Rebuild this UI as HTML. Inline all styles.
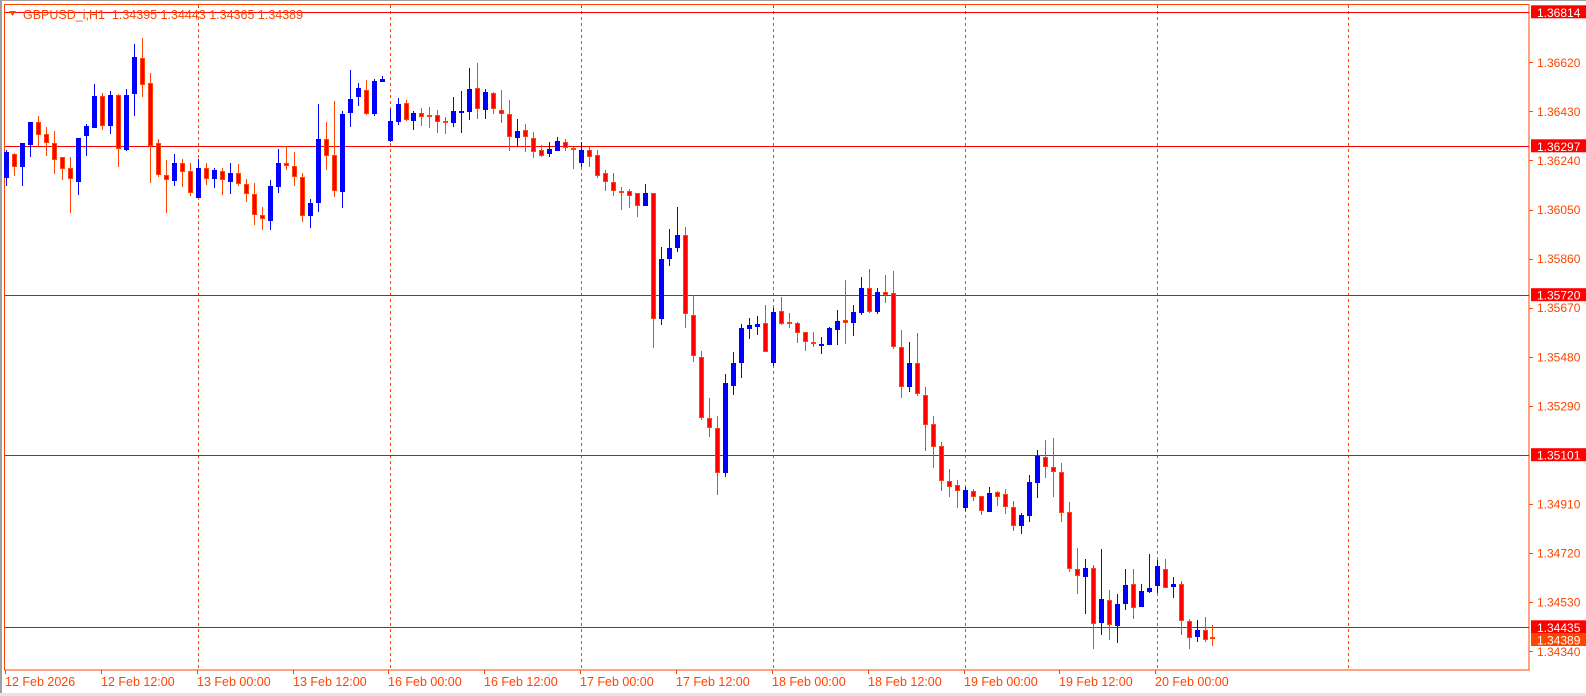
<!DOCTYPE html>
<html><head><meta charset="utf-8"><style>
html,body{margin:0;padding:0;background:#fff;width:1586px;height:696px;overflow:hidden}
svg{display:block}
text{font-family:"Liberation Sans",sans-serif}
</style></head><body>
<svg id="c" width="1586" height="696" xmlns="http://www.w3.org/2000/svg">
<rect x="0" y="0" width="1586" height="696" fill="#fff"/>
<rect x="0" y="0" width="2" height="696" fill="#a0a0a0"/>
<rect x="0" y="0" width="1586" height="1" fill="#a0a0a0"/>
<rect x="0" y="693" width="1586" height="3" fill="#e4e4e4"/>
<rect x="4.5" y="4.5" width="1524.5" height="665.5" fill="none" stroke="#ff4500" stroke-width="1"/>
<g id="grid" stroke="#ff4500" stroke-width="1" stroke-dasharray="3,3"></g>
<g id="hl" stroke="#ff0000" stroke-width="1"></g>
<g id="cd"></g>
<g id="ax" fill="#ff4500" font-size="12"></g>
<polygon points="9,11 16,11 12.5,16" fill="#ff4500"/>
<text x="23" y="19" font-size="12.5" fill="#ff4500" style="white-space:pre">GBPUSD_i,H1  1.34395 1.34443 1.34365 1.34389</text>
</svg>
<script>
var NS="http://www.w3.org/2000/svg";
function el(p,t,a,txt){var e=document.createElementNS(NS,t);for(var k in a)e.setAttribute(k,a[k]);if(txt!=null)e.textContent=txt;document.getElementById(p).appendChild(e);return e;}
var vx=[198,389.7,581.4,773,964.8,1156.5,1348];
vx.forEach(function(x){x=Math.round(x)+0.5;el('grid','line',{x1:x,y1:5,x2:x,y2:670});});
[12.3,146.3,295.2,455.2,627.3].forEach(function(y){y=Math.round(y)+0.5;el('hl','line',{x1:5,y1:y,x2:1529,y2:y});});
var segs=[
[0,0,"B455,533,450,557 R462,502,458,528 B430,500,430,557 B366,434,366,470 R366,406,348,438 R402,430,381,467 R430,479,393,521 R471,506,471,539 R505,538,471,638 B414,545,414,584 B379,409,371,467 B288,383,252,385 R288,377,280,390 B286,377,272,402 R286,448,282,500 B286,450,267,453 B171,281,131,347 R174,254,113,291 R249,437,219,548 R430,526,417,530 R525,541,481,638 B489,543,462,557 R489,515,476,560 R513,580,489,587 B504,593,477,593 R505,538,489,555 B510,536,505,563 R514,541,505,584 B519,545,489,581 R520,553,493,557 R552,583,537,607 R582,646,550,676 R646,656,620,690 B558,662,540,690 B489,560,447,580 R489,499,438,511 R498,530,456,558 R532,647,520,665 B608,647,596,683 B417,608,313,635 R417,467,366,509 R465,572,303,590 B342,575,333,623 B297,338,210,380 B264,290,249,317 R270,342,240,345 B243,342,237,349 B237,247,228,247 B363,422,327,426"],
[49,60,"B132,185,115,195 R130,180,120,183 B158,183,153,210 R160,170,145,198 R165,167,142,204 R165,185,150,218 R183,187,172,222 B153,188,110,200 B153,157,93,218 B87,155,23,180 R85,148,8,177 B97,150,87,177 R100,148,96,162 R150,163,90,188 R162,232,120,272 B213,233,177,260 R210,232,192,275 R235,275,215,293 R270,287,256,292 B267,281,246,290 B243,272,230,272 R247,265,237,272 R264,268,262,326 B270,308,247,322 R270,290,262,320 R286,347,270,353 R340,367,330,392 R367,392,340,407 R392,397,380,449 R393,407,387,443 R400,437,400,470 B400,437,372,437 R400,778,400,863 B597,776,562,795 B565,597,507,617 B525,563,440,575 R526,763,500,803 R766,887,706,905 R892,1073,872,1080 R1075,1105,1013,1130 R1105,1240,1068,1305 B970,1240,942,1250 B910,977,876,1005 B805,908,792,953 B796,808,774,838 B793,800,768,825 R790,877,735,877 B757,910,745,918 R753,792,711,795 R785,790,760,803"],
[99,260,"R190,220,185,250 R217,247,215,272 R247,253,215,262 B253,257,232,282 B205,254,200,254 B183,209,150,254 R181,190,60,251 B156,188,135,228 B84,160,51,165 R84,157,27,160 B96,157,84,162 R96,104,45,128 R100,260,33,266 R262,380,210,413 B310,380,246,395 R310,401,218,407 R406,496,381,572 R492,560,468,623 R559,664,546,692 R663,680,627,710 R676,694,660,743 B690,743,680,752 R692,711,688,722 R709,753,709,765 B700,755,682,755 R697,711,692,737 R703,742,688,763 R742,797,723,812 B766,797,758,822 B667,767,645,787 B587,668,570,713 R591,620,540,653 R622,635,533,710 R636,758,608,785 R757,926,725,935 R928,948,863,1003 B925,950,898,1063 R925,1093,915,1168 B1018,1090,867,1125 R1021,1096,990,1140 B1032,1097,1003,1148 B976,1033,927,1050 R972,1045,927,1078 B994,1042,972,1042 B985,995,882,1000 B918,977,900,1000 R928,985,897,985 B972,982,952,1015 R972,1083,962,1125 R1083,1133,1078,1168"],
[149,540,"B270,290,240,305 R270,301,231,307 R292,298,255,318"]
];
segs.forEach(function(s){
  var i=s[0],y0=s[1];
  s[2].split(" ").forEach(function(c){
    var t=c[0],v=c.slice(1).split(",").map(Number);
    var x=Math.round(6+7.99*i);
    var bt=Math.round(y0+v[0]/3),bb=Math.round(y0+v[1]/3),wt=Math.round(y0+v[2]/3),wb=Math.round(y0+v[3]/3);
    if(bb-bt<2)bb=bt+2;
    if(t=="B"){
      el('cd','rect',{x:x,y:wt,width:1,height:Math.max(1,wb-wt),fill:"#0000ff"});
      el('cd','rect',{x:x-2,y:bt,width:5,height:bb-bt,fill:"#0000ff"});
    }else{
      el('cd','rect',{x:x,y:wt,width:1,height:Math.max(1,wb-wt),fill:"#ff4500"});
      el('cd','rect',{x:x-2,y:bt,width:5,height:bb-bt,fill:"#ff4500"});
      if(bb-bt>2)el('cd','rect',{x:x-1,y:bt+1,width:3,height:bb-bt-2,fill:"#ff0000"});
    }
    i++;
  });
});
function py(p){return 62.3+(1.36620-p)/0.0019*49.08;}
["1.36620","1.36430","1.36240","1.36050","1.35860","1.35670","1.35480","1.35290","1.34910","1.34720","1.34530","1.34340"].forEach(function(s){
  var y=py(parseFloat(s));
  el('ax','rect',{x:1529,y:Math.round(y),width:4,height:1});
  el('ax','text',{x:1537,y:y+4.5},s);
});
[["1.36814",12.3,"#ff0000"],["1.36297",146.3,"#ff0000"],["1.35720",295.2,"#ff0000"],["1.35101",455.2,"#ff0000"],["1.34435",627.3,"#ff0000"],["1.34389",640,"#ff4500"]].forEach(function(a){
  el('ax','rect',{x:1531,y:a[1]-7,width:55,height:13,fill:a[2]});
  el('ax','text',{x:1537,y:a[1]+4.5,fill:"#fff"},a[0]);
});
var tl=["12 Feb 2026","12 Feb 12:00","13 Feb 00:00","13 Feb 12:00","16 Feb 00:00","16 Feb 12:00","17 Feb 00:00","17 Feb 12:00","18 Feb 00:00","18 Feb 12:00","19 Feb 00:00","19 Feb 12:00","20 Feb 00:00"];
tl.forEach(function(s,k){
  var x=Math.round(5+95.85*k);
  el('ax','rect',{x:x,y:670,width:1,height:4});
  el('ax','text',{x:x,y:686,"font-size":"12.5"},s);
});
</script>
</body></html>
